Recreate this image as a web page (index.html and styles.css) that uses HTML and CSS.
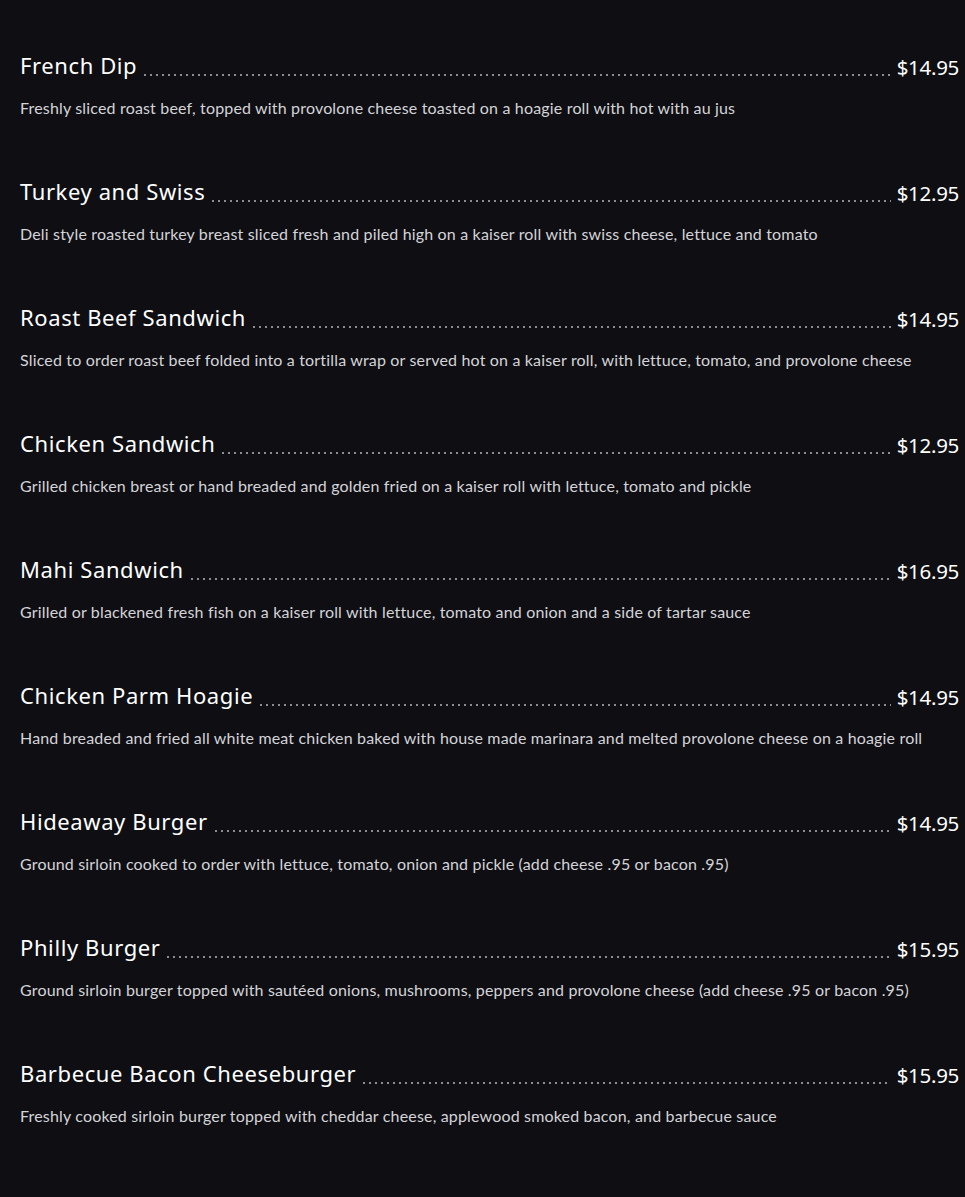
FILE: index.html
```html
<!DOCTYPE html>
<html lang="en">
<head>
<meta charset="utf-8">
<title>Sandwiches</title>
<link rel="stylesheet" href="styles.css">
</head>
<body>
<main class="menu">
  <section class="item">
    <div class="head"><h3 class="name">French Dip</h3><span class="leader"></span><span class="price">$14.95</span></div>
    <p class="desc">Freshly sliced roast beef, topped with provolone cheese toasted on a hoagie roll with hot with au jus</p>
  </section>
  <section class="item">
    <div class="head"><h3 class="name">Turkey and Swiss</h3><span class="leader"></span><span class="price">$12.95</span></div>
    <p class="desc">Deli style roasted turkey breast sliced fresh and piled high on a kaiser roll with swiss cheese, lettuce and tomato</p>
  </section>
  <section class="item">
    <div class="head"><h3 class="name">Roast Beef Sandwich</h3><span class="leader"></span><span class="price">$14.95</span></div>
    <p class="desc">Sliced to order roast beef folded into a tortilla wrap or served hot on a kaiser roll, with lettuce, tomato, and provolone cheese</p>
  </section>
  <section class="item">
    <div class="head"><h3 class="name">Chicken Sandwich</h3><span class="leader"></span><span class="price">$12.95</span></div>
    <p class="desc">Grilled chicken breast or hand breaded and golden fried on a kaiser roll with lettuce, tomato and pickle</p>
  </section>
  <section class="item">
    <div class="head"><h3 class="name">Mahi Sandwich</h3><span class="leader"></span><span class="price">$16.95</span></div>
    <p class="desc">Grilled or blackened fresh fish on a kaiser roll with lettuce, tomato and onion and a side of tartar sauce</p>
  </section>
  <section class="item">
    <div class="head"><h3 class="name">Chicken Parm Hoagie</h3><span class="leader"></span><span class="price">$14.95</span></div>
    <p class="desc">Hand breaded and fried all white meat chicken baked with house made marinara and melted provolone cheese on a hoagie roll</p>
  </section>
  <section class="item">
    <div class="head"><h3 class="name">Hideaway Burger</h3><span class="leader"></span><span class="price">$14.95</span></div>
    <p class="desc">Ground sirloin cooked to order with lettuce, tomato, onion and pickle (add cheese .95 or bacon .95)</p>
  </section>
  <section class="item">
    <div class="head"><h3 class="name">Philly Burger</h3><span class="leader"></span><span class="price">$15.95</span></div>
    <p class="desc">Ground sirloin burger topped with sautéed onions, mushrooms, peppers and provolone cheese (add cheese .95 or bacon .95)</p>
  </section>
  <section class="item">
    <div class="head"><h3 class="name">Barbecue Bacon Cheeseburger</h3><span class="leader"></span><span class="price">$15.95</span></div>
    <p class="desc">Freshly cooked sirloin burger topped with cheddar cheese, applewood smoked bacon, and barbecue sauce</p>
  </section>
</main>
</body>
</html>
```
FILE: styles.css
```css
html, body {
  margin: 0;
  padding: 0;
  background: #0e0e13;
}
.menu {
  padding: 47px 6px 0 20px;
  display: flex;
  flex-direction: column;
}
.item {
  height: 126px;
}
.head {
  display: flex;
  align-items: flex-end;
  gap: 6px;
  height: 32px;
}
.name {
  margin: 0;
  font-family: "Noto Sans", sans-serif;
  font-weight: 400;
  font-size: 22px;
  line-height: 28px;
  color: #ffffff;
  letter-spacing: 0.6px;
  white-space: nowrap;
}
.leader {
  flex: 1;
  height: 2px;
  margin-bottom: 3px;
  background-image: linear-gradient(to right, #8c8c92 2px, transparent 2px);
  background-size: 6px 2px;
  background-repeat: repeat-x;
  background-position: 1px 0;
}
.price {
  font-family: "Noto Sans", sans-serif;
  font-size: 20.5px;
  line-height: 28px;
  letter-spacing: -0.3px;
  margin-bottom: -2px;
  color: #ffffff;
  white-space: nowrap;
}
.desc {
  margin: 19px 0 0;
  font-family: "Lato", sans-serif;
  font-size: 16px;
  line-height: 20px;
  letter-spacing: 0.17px;
  color: #d4d4d8;
}
```
